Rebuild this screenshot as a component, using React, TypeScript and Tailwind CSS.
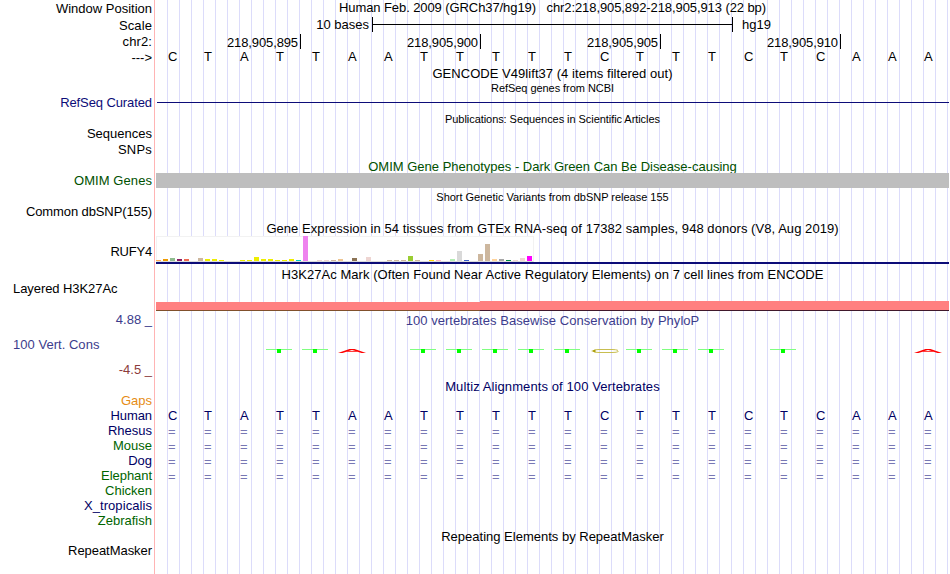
import type { ReactNode } from 'react';

const BASES = 'CTATTAATTTTTCTTTCTCAAA'.split('');

const BARS: Record<number, [number, string]> = {
  0: [1, '#ffaa56'], 1: [2, '#ee9a00'], 2: [3, '#8fbc8f'], 3: [2, '#8b1c62'], 4: [2, '#ee6a50'],
  6: [3, '#cdb79e'], 7: [2, '#eeee00'], 8: [2, '#eeee00'], 9: [1, '#eeee00'],
  12: [1, '#eeee00'], 13: [1, '#eeee00'], 14: [4, '#eeee00'], 15: [2, '#eeee00'], 16: [2, '#eeee00'],
  17: [1, '#eeee00'], 18: [1, '#eeee00'], 19: [2, '#eeee00'], 20: [1, '#00cdcd'], 21: [25, '#ee82ee'],
  23: [1, '#eed5d2'], 24: [1, '#eed5d2'], 25: [1, '#cdb79e'], 26: [2, '#eec591'], 28: [3, '#8b7355'],
  30: [4, '#eed5d2'], 33: [1, '#cdb79e'], 34: [1, '#cdb79e'], 35: [1, '#cdb79e'], 36: [5, '#9acd32'],
  37: [1, '#cdb79e'], 39: [1, '#ffd700'], 40: [1, '#ffb6c1'], 42: [2, '#b4eeb4'], 43: [10, '#d9d9d9'],
  44: [1, '#3a5fcd'], 46: [7, '#cdb79e'], 47: [17, '#cdb79e'], 48: [2, '#ffd39b'], 49: [2, '#a6a6a6'],
  50: [1, '#008b45'], 51: [1, '#eed5d2'], 52: [3, '#eed5d2'], 53: [5, '#ff00ff'],
};

const PHYLOP = '---TTA-TTTTTCTTT-T---A'.split('');

function Label({ className = '', children }: { className?: string; children: ReactNode }) {
  return <div className={`h-[15px] shrink-0 ${className}`}>{children}</div>;
}

function Title({ className = '', children }: { className?: string; children: ReactNode }) {
  return (
    <div className={`flex h-[15px] w-[793px] shrink-0 justify-center ${className}`}>
      <span>{children}</span>
    </div>
  );
}

function Note({ className = '', children }: { className?: string; children: ReactNode }) {
  return (
    <div className={`flex h-3 w-[793px] shrink-0 justify-center text-[11px] leading-3 ${className}`}>
      <span>{children}</span>
    </div>
  );
}

function Letters({ items, className = '' }: { items: string[]; className?: string }) {
  return (
    <div className={`flex h-[15px] shrink-0 ${className}`}>
      {items.map((c, i) => (
        <span key={i} className="w-9 shrink-0 pl-3">{c}</span>
      ))}
    </div>
  );
}

function Logo({ base }: { base: string }) {
  return (
    <div className="h-1 w-9 shrink-0">
      {base === 'T' && (
        <div className="ml-0.5 flex h-1 w-[26px] flex-col items-center">
          <div className="flex h-px w-full justify-center bg-[#80ff80]">
            <div className="h-1 w-1 shrink-0 bg-[#00ff00]" />
          </div>
        </div>
      )}
      {base === 'A' && (
        <svg className="ml-0.5 block" width="28" height="4" viewBox="0 0 28 4">
          <path d="M0 4 L11.5 0 H16.5 L28 4 H23.5 L19.5 2.8 H8.5 L4.5 4 Z M10.5 2.1 H17.5 L14 .9 Z" fill="#ff0000" fillRule="evenodd" />
        </svg>
      )}
      {base === 'C' && (
        <svg className="ml-[3px] block" width="28" height="4" viewBox="0 0 28 4">
          <path d="M27 1.4 Q25 .5 21 .5 H8 Q2 .5 2 2 Q2 3.5 8 3.5 H21 Q26 3.5 27.5 2.5" fill="none" stroke="#c8be50" strokeWidth="1" />
          <path d="M0 2 L4.5 .8 V3.2 Z" fill="#a89a00" />
        </svg>
      )}
    </div>
  );
}

export default function App() {
  return (
    <div className="flex h-[574px] w-[950px] overflow-hidden bg-white font-['Liberation_Sans',Arial,sans-serif] text-[13px] leading-[15px] whitespace-pre text-black">
      {/* Track labels */}
      <div className="flex w-[154px] shrink-0 flex-col pr-[2px] text-right">
        <Label className="mt-px">Window Position</Label>
        <Label className="mt-0.5 tracking-[0.1px]">Scale</Label>
        <Label className="mt-px tracking-[0.1px]">chr2:</Label>
        <Label className="mt-px">---&gt;</Label>
        <Label className="mt-[30px] tracking-[-0.1px] text-[#0c0c78]">RefSeq Curated</Label>
        <Label className="mt-4">Sequences</Label>
        <Label className="mt-px tracking-[0.2px]">SNPs</Label>
        <Label className="mt-4 tracking-[0.07px] text-[#005000]">OMIM Genes</Label>
        <Label className="mt-4 tracking-[-0.11px]">Common dbSNP(155)</Label>
        <Label className="mt-[25px] tracking-[-0.2px]">RUFY4</Label>
        <Label className="mt-[22px] pl-[13px] text-left tracking-[-0.07px]">Layered H3K27Ac</Label>
        <Label className="mt-4 text-[#3c3c8c]">4.88 _</Label>
        <Label className="mt-2.5 pl-[13px] text-left tracking-[0.03px] text-[#3c3c8c]">100 Vert. Cons</Label>
        <Label className="mt-2.5 text-[#8c3c3c]">-4.5 _</Label>
        <Label className="mt-4 text-[#e68c14]">Gaps</Label>
        <Label className="tracking-[-0.1px] text-[#000064]">Human</Label>
        <Label className="text-[#000064]">Rhesus</Label>
        <Label className="text-[#006400]">Mouse</Label>
        <Label className="text-[#000064]">Dog</Label>
        <Label className="tracking-[-0.05px] text-[#006400]">Elephant</Label>
        <Label className="text-[#006400]">Chicken</Label>
        <Label className="tracking-[0.07px] text-[#000064]">X_tropicalis</Label>
        <Label className="text-[#006400]">Zebrafish</Label>
        <Label className="mt-[15px] tracking-[-0.05px]">RepeatMasker</Label>
      </div>
      <div className="mr-px w-px shrink-0 bg-[#ffb4b4]" />

      {/* Track data over the coordinate grid */}
      <div className="flex w-[793px] shrink-0 flex-col overflow-hidden bg-[repeating-linear-gradient(90deg,transparent_0_11px,#dcdcfa_11px_12px)]">
        <Title className="tracking-[-0.087px]">Human Feb. 2009 (GRCh37/hg19)   chr2:218,905,892-218,905,913 (22 bp)</Title>
        <div className="mt-0.5 flex h-[15px] shrink-0">
          <span className="w-[216px] pr-[3px] text-right">10 bases</span>
          <div className="flex w-[361px] items-center border-x border-black">
            <div className="h-px w-full bg-black" />
          </div>
          <span className="pl-[9px]">hg19</span>
        </div>
        <div className="mt-0.5 flex h-[15px] shrink-0 text-right tracking-[-0.11px]">
          <div className="w-[145px] border-r border-black pt-px pr-0.5">218,905,895</div>
          <div className="w-[180px] border-r border-black pt-px pr-0.5">218,905,900</div>
          <div className="w-[180px] border-r border-black pt-px pr-0.5">218,905,905</div>
          <div className="w-[180px] border-r border-black pt-px pr-0.5">218,905,910</div>
        </div>
        <Letters items={BASES} />
        <Title className="mt-0.5 tracking-[0.045px]">GENCODE V49lift37 (4 items filtered out)</Title>
        <Note className="mt-px tracking-[-0.05px]">RefSeq genes from NCBI</Note>
        <div className="mt-2 ml-px h-px shrink-0 bg-[#0c0c78]" />
        <Note className="mt-2.5 tracking-[-0.06px]">Publications: Sequences in Scientific Articles</Note>
        <Title className="mt-[34px] text-[#005000]">OMIM Gene Phenotypes - Dark Green Can Be Disease-causing</Title>
        <div className="-mt-px h-[15px] shrink-0 bg-[#bebebe]" />
        <Note className="mt-[3px] tracking-[-0.02px]">Short Genetic Variants from dbSNP release 155</Note>
        <Title className="mt-[18px] tracking-[0.055px]">Gene Expression in 54 tissues from GTEx RNA-seq of 17382 samples, 948 donors (V8, Aug 2019)</Title>

        <div className="flex h-[26px] w-[378px] shrink-0 items-end gap-0.5 border border-b-[#dcdcdc] border-[#f2f2f2] bg-white">
          {Array.from({ length: 54 }, (_, i) => (
            <div
              key={i}
              className="relative -left-px w-[5px] shrink-0"
              style={{ height: BARS[i]?.[0] ?? 0, backgroundColor: BARS[i]?.[1] }}
            />
          ))}
        </div>
        <div className="h-0.5 shrink-0 bg-[#0c0c78]" />

        <Title className="mt-[3px] tracking-[0.052px]">H3K27Ac Mark (Often Found Near Active Regulatory Elements) on 7 cell lines from ENCODE</Title>
        <div className="mt-[19px] flex h-2.5 shrink-0 items-end">
          <div className="h-[9px] w-[324px] border-b border-[#80502c] bg-[#ff8080]" />
          <div className="h-2.5 grow border-b border-[#40182c] bg-[#ff8080]" />
        </div>
        <Title className="mt-0.5 tracking-[0.035px] text-[#3c3c8c]">100 vertebrates Basewise Conservation by PhyloP</Title>
        <div className="mt-[21px] flex h-1 shrink-0">
          {PHYLOP.map((b, i) => <Logo key={i} base={b} />)}
        </div>
        <Title className="mt-[26px] tracking-[0.1px] text-[#000064]">Multiz Alignments of 100 Vertebrates</Title>
        <Letters items={BASES} className="mt-3.5 text-[#000064]" />
        <div className="mt-px shrink-0 text-[#7878b4]">
          {[0, 1, 2, 3].map((r) => <Letters key={r} items={BASES.map(() => '=')} />)}
        </div>
        <Title className="mt-[45px]">Repeating Elements by RepeatMasker</Title>
      </div>
    </div>
  );
}
